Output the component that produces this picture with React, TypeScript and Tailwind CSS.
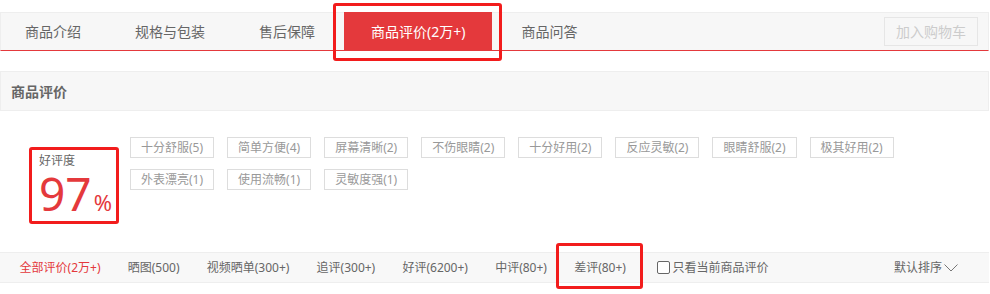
const tabs = ['商品介绍', '规格与包装', '售后保障', '商品评价(2万+)', '商品问答'];

const tags = [
  '十分舒服(5)',
  '简单方便(4)',
  '屏幕清晰(2)',
  '不伤眼睛(2)',
  '十分好用(2)',
  '反应灵敏(2)',
  '眼睛舒服(2)',
  '极其好用(2)',
  '外表漂亮(1)',
  '使用流畅(1)',
  '灵敏度强(1)',
];

const filters = [
  '全部评价(2万+)',
  '晒图(500)',
  '视频晒单(300+)',
  '追评(300+)',
  '好评(6200+)',
  '中评(80+)',
  '差评(80+)',
];

export default function App() {
  return (
    <div
      className="w-[990px] h-[294px] bg-white overflow-hidden pt-[12px]"
      style={{ fontFamily: '"Noto Sans", "Noto Sans CJK SC", sans-serif' }}
    >
      {/* Tabs */}
      <div className="w-[989px] h-[39px] flex items-stretch bg-[#f7f7f7] border-t border-x border-[#eee] border-b border-b-[#e4393c]">
        <div className="flex gap-[4px] -ml-px">
          {tabs.map((t, i) =>
            i === 3 ? (
              <div key={t} className="relative -mt-px flex items-center px-[27px] bg-[#e4393c] text-white text-[14px]">
                {t}
                <div className="absolute left-[-11px] right-[-10px] top-[-9px] bottom-[-11px] border-[3px] border-[#f21c1c] rounded-[3px]" />
              </div>
            ) : (
              <div key={t} className="flex items-center px-[25px] text-[#666] text-[14px]">
                {t}
              </div>
            )
          )}
        </div>
        <div className="ml-auto flex items-center pr-[10px]">
          <div className="w-[94px] h-[29px] border border-[#e6e6e6] flex items-center justify-center text-[14px] text-[#ccc]">
            加入购物车
          </div>
        </div>
      </div>

      {/* Section header */}
      <div className="mt-[20px] w-[989px] h-[40px] bg-[#f7f7f7] border border-[#eee] flex items-center pl-[10px] text-[14px] font-bold text-[#666]">
        商品评价
      </div>

      {/* Rating + tags */}
      <div className="h-[141px] flex pt-[26px]">
        <div className="ml-[29px] mt-[10px] w-[90px] h-[77px] border-[3px] border-[#f21c1c] rounded-[3px] pl-[7px] pt-[2px] overflow-hidden">
          <div className="text-[12px] text-[#666] leading-[18px]">好评度</div>
          <div className="flex items-baseline text-[#e4393c] h-[46px]">
            <span className="text-[46px] leading-[40px] mt-[3px]">97</span>
            <span className="text-[22px] leading-[22px] ml-[2px]">%</span>
          </div>
        </div>
        <div className="ml-[11px] w-[790px] flex flex-wrap content-start gap-x-[13px] gap-y-[11px]">
          {tags.map((t) => (
            <div
              key={t}
              className="h-[21px] px-[10px] border border-[#ddd] flex items-center text-[12px] text-[#999]"
            >
              {t}
            </div>
          ))}
        </div>
      </div>

      {/* Filter bar */}
      <div className="w-[989px] h-[31px] bg-[#f8f8f8] border-y border-[#eee] flex items-center pl-[6px] text-[12px] text-[#666]">
        {filters.map((f, i) => (
          <div key={f} className={`relative px-[13.6px] ${i === 0 ? 'text-[#e4393c]' : ''}`}>
            {f}
            {i === 6 && (
              <div className="absolute left-[-5px] right-[-3px] top-[-16px] bottom-[-12px] border-[3px] border-[#f21c1c] rounded-[3px]" />
            )}
          </div>
        ))}
        <label className="ml-[17px] flex items-center gap-[3px]">
          <span className="w-[13px] h-[13px] border border-[#666] rounded-[2px] bg-white" />
          只看当前商品评价
        </label>
        <div className="ml-auto mr-[31px] flex items-center">
          默认排序
          <svg width="14" height="8" viewBox="0 0 14 8" className="ml-[2px]" fill="none">
            <polyline points="0.5,0.5 7,7 13.5,0.5" stroke="#777" strokeWidth="1" />
          </svg>
        </div>
      </div>
    </div>
  );
}
